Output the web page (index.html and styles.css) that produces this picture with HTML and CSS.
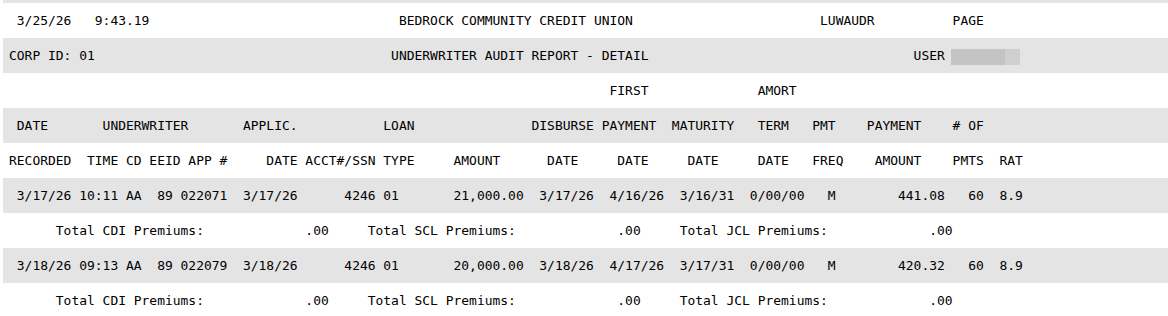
FILE: index.html
```html
<!DOCTYPE html>
<html>
<head>
<meta charset="utf-8">
<title>Underwriter Audit Report</title>
<link rel="stylesheet" href="styles.css">
</head>
<body>
<div class="report">
<div class="row shade top"></div>
<div class="row"> 3/25/26   9:43.19                                BEDROCK COMMUNITY CREDIT UNION                        LUWAUDR          PAGE</div>
<div class="row shade">CORP ID: 01                                      UNDERWRITER AUDIT REPORT - DETAIL                                  USER <span class="redact"></span></div>
<div class="row">                                                                             FIRST              AMORT</div>
<div class="row shade"> DATE       UNDERWRITER       APPLIC.           LOAN               DISBURSE PAYMENT  MATURITY   TERM   PMT    PAYMENT    # OF</div>
<div class="row">RECORDED  TIME CD EEID APP #     DATE ACCT#/SSN TYPE     AMOUNT      DATE     DATE     DATE     DATE   FREQ    AMOUNT    PMTS  RAT</div>
<div class="row shade"> 3/17/26 10:11 AA  89 022071  3/17/26      4246 01       21,000.00  3/17/26  4/16/26  3/16/31  0/00/00   M        441.08   60  8.9</div>
<div class="row">      Total CDI Premiums:             .00     Total SCL Premiums:             .00     Total JCL Premiums:             .00</div>
<div class="row shade"> 3/18/26 09:13 AA  89 022079  3/18/26      4246 01       20,000.00  3/18/26  4/17/26  3/17/31  0/00/00   M        420.32   60  8.9</div>
<div class="row">      Total CDI Premiums:             .00     Total SCL Premiums:             .00     Total JCL Premiums:             .00</div>
</div>
</body>
</html>
```
FILE: styles.css
```css
html, body {
  margin: 0;
  padding: 0;
  background: #ffffff;
  overflow: hidden;
}

body {
  font-family: "DejaVu Sans Mono", "Liberation Mono", monospace;
  font-size: 12.96px;
  color: #000000;
}

.report {
  margin-left: 3px;
}

.row {
  height: 35px;
  line-height: 35px;
  white-space: pre;
  padding-left: 6px;
}

.row.top {
  height: 3px;
}

.shade {
  background: #e4e4e4;
}

.redact {
  display: inline-block;
  width: 69px;
  height: 16px;
  margin-left: -2px;
  vertical-align: middle;
  background: linear-gradient(to right, #c4c4c4 0, #c4c4c4 54px, #cfcfcf 54px, #cfcfcf 100%);
}
```
